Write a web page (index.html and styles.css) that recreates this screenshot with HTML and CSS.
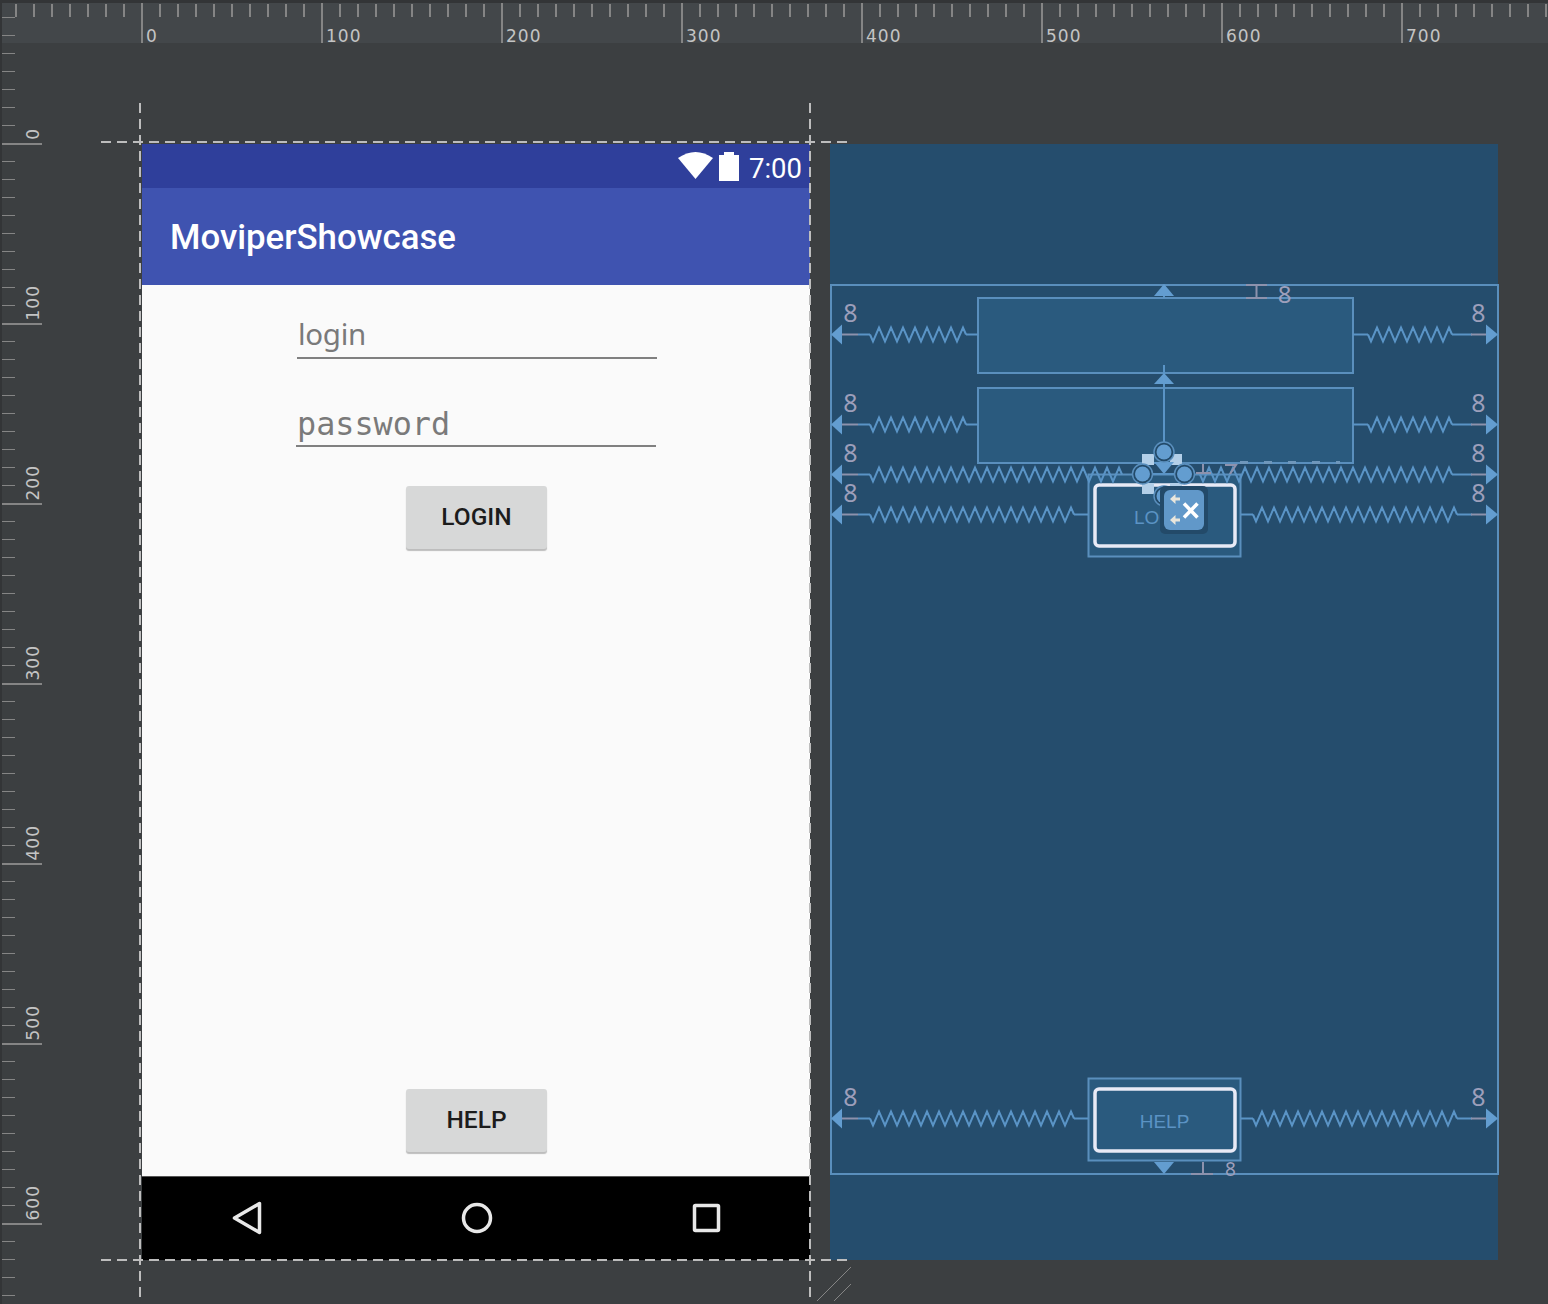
FILE: index.html
```html
<!DOCTYPE html>
<html lang="en">
<head>
    <meta charset="UTF-8">
    <title>MoviperShowcase layout editor</title>
    <link rel="stylesheet" href="styles.css">
</head>
<body>

<div class="editor">
    <div class="ruler-left">
        <div class="mark-v first"><span>0</span></div>
        <div class="mark-v"><span>100</span></div>
        <div class="mark-v"><span>200</span></div>
        <div class="mark-v"><span>300</span></div>
        <div class="mark-v"><span>400</span></div>
        <div class="mark-v"><span>500</span></div>
        <div class="mark-v"><span>600</span></div>
    </div>
    <div class="ruler-top">
        <div class="mark-h">0</div>
        <div class="mark-h">100</div>
        <div class="mark-h">200</div>
        <div class="mark-h">300</div>
        <div class="mark-h">400</div>
        <div class="mark-h">500</div>
        <div class="mark-h">600</div>
        <div class="mark-h">700</div>
    </div>

    <div class="canvas">
        <!-- design view -->
        <div class="phone">
            <div class="status-bar">
                <svg class="wifi" width="36" height="28" viewBox="0 0 36 28">
                    <path d="M0 6 Q17.5 -6 35 6 L17.5 27 Z" fill="#fff"/>
                </svg>
                <svg class="battery" width="20" height="29" viewBox="0 0 20 29">
                    <path d="M5 0 H15 V3 H20 V29 H0 V3 H5 Z" fill="#fff"/>
                </svg>
                <span class="clock">7:00</span>
            </div>
            <div class="app-bar">MoviperShowcase</div>
            <div class="content">
                <div class="form">
                    <div class="field field-login">login</div>
                    <div class="field field-password">password</div>
                    <div class="btn">LOGIN</div>
                </div>
                <div class="btn">HELP</div>
            </div>
            <div class="nav-bar">
                <svg width="668" height="84" viewBox="142 1176 668 84">
                    <path class="nav-icon" d="M259.500 1203.500 V1232.500 L234.500 1218 Z"/>
                    <circle class="nav-icon" cx="477" cy="1218" r="13.500"/>
                    <rect class="nav-icon" x="694.500" y="1205.500" width="24" height="25" rx="1"/>
                </svg>
            </div>
        </div>

        <!-- blueprint view -->
        <svg class="blueprint" width="668" height="1116" viewBox="830 144 668 1116">
            <defs>
                <path id="zig7" d="M0 0 l3 7 6-14 6 14 6-14 6 14 6-14 6 14 6-14 6 14 6-14 6 14 6-14 6 14 6-14 3 7"/>
                <path id="zig8" d="M0 0 l3 7 6-14 6 14 6-14 6 14 6-14 6 14 6-14 6 14 6-14 6 14 6-14 6 14 6-14 6 14 6-14 3 7"/>
                <path id="zig17" d="M0 0 l3 7 6-14 6 14 6-14 6 14 6-14 6 14 6-14 6 14 6-14 6 14 6-14 6 14 6-14 6 14 6-14 6 14 6-14 6 14 6-14 6 14 6-14 6 14 6-14 6 14 6-14 6 14 6-14 6 14 6-14 6 14 6-14 6 14 6-14 3 7"/>
                <path id="zig21" d="M0 0 l3 7 6-14 6 14 6-14 6 14 6-14 6 14 6-14 6 14 6-14 6 14 6-14 6 14 6-14 6 14 6-14 6 14 6-14 6 14 6-14 6 14 6-14 6 14 6-14 6 14 6-14 6 14 6-14 6 14 6-14 6 14 6-14 6 14 6-14 6 14 6-14 6 14 6-14 6 14 6-14 6 14 6-14 3 7"/>
                <g id="arrow-left">
                    <path class="tip" d="M1 0 L12 -10 V10 Z"/>
                    <path class="grey" d="M12 0 H28"/>
                </g>
                <g id="arrow-right">
                    <path class="tip" d="M668 0 L656 -10 V10 Z"/>
                    <path class="grey" d="M656 0 H641"/>
                </g>
                <g id="anchor">
                    <circle class="anchor-ring" r="10"/>
                    <circle class="anchor" r="7.500"/>
                </g>
            </defs>

            <!-- parent and widgets -->
            <rect class="box" x="831" y="285" width="667" height="889"/>
            <rect class="box widget" x="978" y="298" width="375" height="75"/>
            <rect class="box widget" x="978" y="388" width="375" height="75"/>
            <rect class="box widget" x="1088.500" y="474.500" width="152" height="82"/>
            <rect class="box widget" x="1088.500" y="1078.500" width="152" height="82"/>
            <rect class="bound" x="1095" y="485" width="140" height="61" rx="4"/>
            <rect class="bound" x="1095" y="1089" width="140" height="62" rx="4"/>
            <text class="widget-label" x="1134" y="524">LOGIN</text>
            <text class="widget-label" x="1164.500" y="1128" text-anchor="middle">HELP</text>

            <!-- left constraints -->
            <use href="#zig8" class="zig" x="870" y="334.500"/>
            <use href="#zig8" class="zig" x="870" y="424.500"/>
            <use href="#zig21" class="zig" x="870" y="474.500"/>
            <use href="#zig17" class="zig" x="870" y="514.500"/>
            <use href="#zig17" class="zig" x="870" y="1118.500"/>
            <path class="line" d="M858 334.500 H870 M966 334.500 H978 M858 424.500 H870 M966 424.500 H978 M858 474.500 H870 M858 514.500 H870 M1074 514.500 H1088 M858 1118.500 H870 M1074 1118.500 H1088"/>
            <use href="#arrow-left" x="830" y="334.500"/>
            <use href="#arrow-left" x="830" y="424.500"/>
            <use href="#arrow-left" x="830" y="474.500"/>
            <use href="#arrow-left" x="830" y="514.500"/>
            <use href="#arrow-left" x="830" y="1118.500"/>

            <!-- right constraints -->
            <use href="#zig7" class="zig" x="1368" y="334.500"/>
            <use href="#zig7" class="zig" x="1368" y="424.500"/>
            <use href="#zig21" class="zig" x="1200" y="474.500"/>
            <use href="#zig17" class="zig" x="1253" y="514.500"/>
            <use href="#zig17" class="zig" x="1253" y="1118.500"/>
            <path class="line" d="M1353 334.500 H1368 M1452 334.500 H1472 M1353 424.500 H1368 M1452 424.500 H1472 M1452 474.500 H1472 M1241 514.500 H1253 M1457 514.500 H1472 M1241 1118.500 H1253 M1457 1118.500 H1472"/>
            <use href="#arrow-right" x="830" y="334.500"/>
            <use href="#arrow-right" x="830" y="424.500"/>
            <use href="#arrow-right" x="830" y="474.500"/>
            <use href="#arrow-right" x="830" y="514.500"/>
            <use href="#arrow-right" x="830" y="1118.500"/>

            <text class="dist" x="850.500" y="322">8</text>
            <text class="dist" x="850.500" y="412">8</text>
            <text class="dist" x="850.500" y="462">8</text>
            <text class="dist" x="850.500" y="502">8</text>
            <text class="dist" x="850.500" y="1106">8</text>
            <text class="dist" x="1478.500" y="322">8</text>
            <text class="dist" x="1478.500" y="412">8</text>
            <text class="dist" x="1478.500" y="462">8</text>
            <text class="dist" x="1478.500" y="502">8</text>
            <text class="dist" x="1478.500" y="1106">8</text>

            <!-- vertical constraints -->
            <path class="tip" d="M1164 284 L1174 296 H1154 Z"/>
            <path class="line" d="M1164 296 V298 M1164 365 V445"/>
            <path class="tip" d="M1164 373 L1174 384 H1154 Z"/>
            <path class="grey" d="M1246 285 H1267 M1256.500 285 V298 M1246 298 H1267"/>
            <text class="dist small" x="1284.500" y="303">8</text>

            <path class="tip" d="M1154 1162 H1174 L1164 1174 Z"/>
            <path class="grey" d="M1203 1162 V1174 M1191 1174 H1213"/>
            <text class="dist tiny" x="1230.500" y="1176">8</text>

            <path class="grey" d="M1203 464 V473 M1196 473 H1211 M1225 465 H1236 L1230 474"/>
            <path class="dashes" d="M1240 462.500 H1340"/>

            <!-- selection handles -->
            <g class="handles">
                <rect class="square" x="1142" y="454" width="12" height="11"/>
                <rect class="square" x="1170" y="454" width="12" height="11"/>
                <rect class="square" x="1142" y="483" width="12" height="11"/>
                <rect class="square" x="1170" y="483" width="12" height="6"/>
                <path class="tip" d="M1154 462 H1174 L1164 474 Z"/>
                <path class="line" d="M1153 474 H1175"/>
                <use href="#anchor" x="1164" y="452"/>
                <use href="#anchor" x="1142.500" y="474"/>
                <use href="#anchor" x="1184.500" y="474"/>
                <use href="#anchor" x="1164" y="496"/>
            </g>

            <!-- clear constraints button -->
            <rect class="clear-shadow" x="1160" y="486" width="48" height="48" rx="5"/>
            <rect class="clear-face" x="1164" y="490" width="40" height="40" rx="6"/>
            <path class="clear-arrow" d="M1170 499 L1175.500 494 V497.500 H1180 V500.500 H1175.500 V504 Z M1170 520 L1175.500 515 V518.500 H1180 V521.500 H1175.500 V525 Z"/>
            <path class="clear-x" d="M1184 503.500 L1197.500 517.500 M1197.500 503.500 L1184 517.500"/>
        </svg>
    </div>

    <!-- guides over both views -->
    <svg class="guides" width="1548" height="1304" viewBox="0 0 1548 1304">
        <path class="guide" d="M140 103 V1298 M810 103 V1298"/>
        <path class="guide" d="M101 142 H848 M101 1260 H848"/>
        <path class="resize" d="M817 1301 L851 1267 M834 1301 L851 1284"/>
    </svg>
</div>

</body>
</html>
```

FILE: styles.css
```css
* {
    box-sizing: border-box;
}
html, body {
    margin: 0;
    height: 100%;
    overflow: hidden;
}
body {
    background-color: #3c3f41;
}
.editor {
    position: relative;
    display: grid;
    grid-template-columns: 42px 1fr;
    grid-template-rows: 43px 1fr;
    width: 1548px;
    height: 1304px;
    font-family: 'DejaVu Sans', sans-serif;
}

/* rulers */
.ruler-top {
    grid-column: 1 / 3;
    grid-row: 1;
    display: flex;
    padding-left: 141px;
    background-color: #43474a;
    background-image: linear-gradient(to right, transparent 15px, #858585 15px, #858585 17px, transparent 17px);
    background-size: 18px 13px;
    background-position: 0 1px;
    background-repeat: repeat-x;
    border-top: 3px solid #333537;
}
.mark-h {
    flex: 0 0 180px;
    border-left: 2px solid #858585;
    padding: 23px 0 0 3px;
    font-size: 17px;
    line-height: 20px;
    letter-spacing: 1px;
    color: #c4c4c4;
}
.ruler-left {
    grid-column: 1;
    grid-row: 1 / 3;
    z-index: 1;
    display: flex;
    flex-direction: column;
    background-image: linear-gradient(to bottom, transparent 17px, #858585 17px, #858585 19px, transparent 19px);
    background-size: 13px 18px;
    background-position: 0 0;
    background-repeat: repeat-y;
    border-left: 2px solid #333537;
}
.mark-v {
    flex: 0 0 180px;
    display: flex;
    justify-content: flex-end;
    align-items: flex-end;
    padding: 0 0 3px;
    border-bottom: 2px solid #858585;
    font-size: 17px;
    letter-spacing: 1px;
    color: #c4c4c4;
}
.mark-v.first {
    flex-basis: 145px;
}
.mark-v span {
    writing-mode: vertical-rl;
    transform: rotate(180deg);
    line-height: 20px;
    margin-right: -1px;
}

/* canvas */
.canvas {
    grid-column: 2;
    grid-row: 2;
    display: flex;
    gap: 20px;
    padding: 101px 0 0 100px;
    align-items: flex-start;
}

/* design view */
.phone {
    display: flex;
    flex-direction: column;
    width: 668px;
    height: 1116px;
    font-family: Roboto, sans-serif;
}
.status-bar {
    display: flex;
    align-items: flex-start;
    justify-content: flex-end;
    height: 44px;
    padding: 8px 8px 0 0;
    background-color: #2f3f9b;
}
.battery {
    margin-left: 5px;
}
.clock {
    margin-left: 10px;
    font-size: 27.500px;
    line-height: 33px;
    color: #fff;
}
.app-bar {
    height: 97px;
    padding: 29px 0 0 28px;
    font-size: 34.800px;
    line-height: 41px;
    font-weight: 500;
    color: #fff;
    background-color: #3f53b0;
}
.content {
    flex: 1;
    display: flex;
    flex-direction: column;
    align-items: center;
    justify-content: space-between;
    padding: 0 0 24px;
    background-color: #fafafa;
}
.form {
    display: flex;
    flex-direction: column;
    align-items: center;
    width: 362px;
}
.field {
    width: 360px;
    align-self: flex-start;
    border-bottom: 2px solid #808080;
    color: #7a7a7a;
}
.field-login {
    height: 74px;
    padding: 28px 0 0 1px;
    font-family: 'Noto Sans', sans-serif;
    font-size: 29.500px;
    letter-spacing: -0.300px;
    line-height: 42px;
    margin-left: 2px;
}
.field-password {
    height: 74px;
    margin-top: 14px;
    margin-left: 1px;
    padding: 31px 0 0 1px;
    font-family: 'DejaVu Sans Mono', monospace;
    font-size: 31.800px;
    line-height: 40px;
}
.btn {
    width: 141px;
    height: 63px;
    margin-left: 1px;
    font-size: 24.500px;
    font-weight: 500;
    line-height: 62px;
    text-align: center;
    color: #1c1c1c;
    background-color: #d7d8d8;
    border-radius: 3px;
    box-shadow: 0 2px 1px #bdbdbd;
}
.form .btn {
    margin-top: 39px;
}
.nav-bar {
    height: 84px;
    background-color: #000;
    border-top: 1px solid #555;
}
.nav-bar svg {
    display: block;
    margin-top: -1px;
}
.nav-icon {
    fill: none;
    stroke: #e8e8e8;
    stroke-width: 3.500;
    stroke-linejoin: round;
}

/* blueprint view */
.blueprint {
    background-color: #254d6d;
    overflow: visible;
    flex: none;
    font-family: 'Noto Sans', sans-serif;
}
.box {
    fill: none;
    stroke: #5a8fbd;
    stroke-width: 2;
}
.box.widget {
    fill: #2a5a7e;
}
.bound {
    fill: #2a5a7e;
    stroke: #e8eaf6;
    stroke-width: 3.500;
}
.widget-label {
    font-family: 'Liberation Sans', sans-serif;
    font-size: 19px;
    fill: #5b93c4;
}
.zig, .line {
    fill: none;
    stroke: #5a94c6;
    stroke-width: 2;
}
.tip {
    fill: #639dd0;
}
.grey {
    fill: none;
    stroke: #8d92ad;
    stroke-width: 2;
}
.dashes {
    fill: none;
    stroke: #6f97bb;
    stroke-width: 3;
    stroke-dasharray: 8 16;
}
.dist {
    font-size: 25px;
    text-anchor: middle;
    fill: #9d9fbb;
}
.dist.small {
    font-size: 24px;
}
.dist.tiny {
    font-size: 19px;
}
.square {
    fill: #b3cfe8;
}
.anchor-ring {
    fill: #234a69;
    stroke: #5a8fbd;
    stroke-width: 1.500;
}
.anchor {
    fill: #639dd0;
}
.clear-shadow {
    fill: #234a69;
}
.clear-face {
    fill: #6198c9;
}
.clear-arrow {
    fill: #e9e6dc;
}
.clear-x {
    fill: none;
    stroke: #fff;
    stroke-width: 3.500;
}

/* guides */
.guides {
    position: absolute;
    top: 0;
    left: 0;
    pointer-events: none;
}
.guide {
    fill: none;
    stroke: #bdbdbd;
    stroke-width: 2;
    stroke-dasharray: 10 6;
}
.resize {
    fill: none;
    stroke: #858585;
    stroke-width: 1;
}
```
